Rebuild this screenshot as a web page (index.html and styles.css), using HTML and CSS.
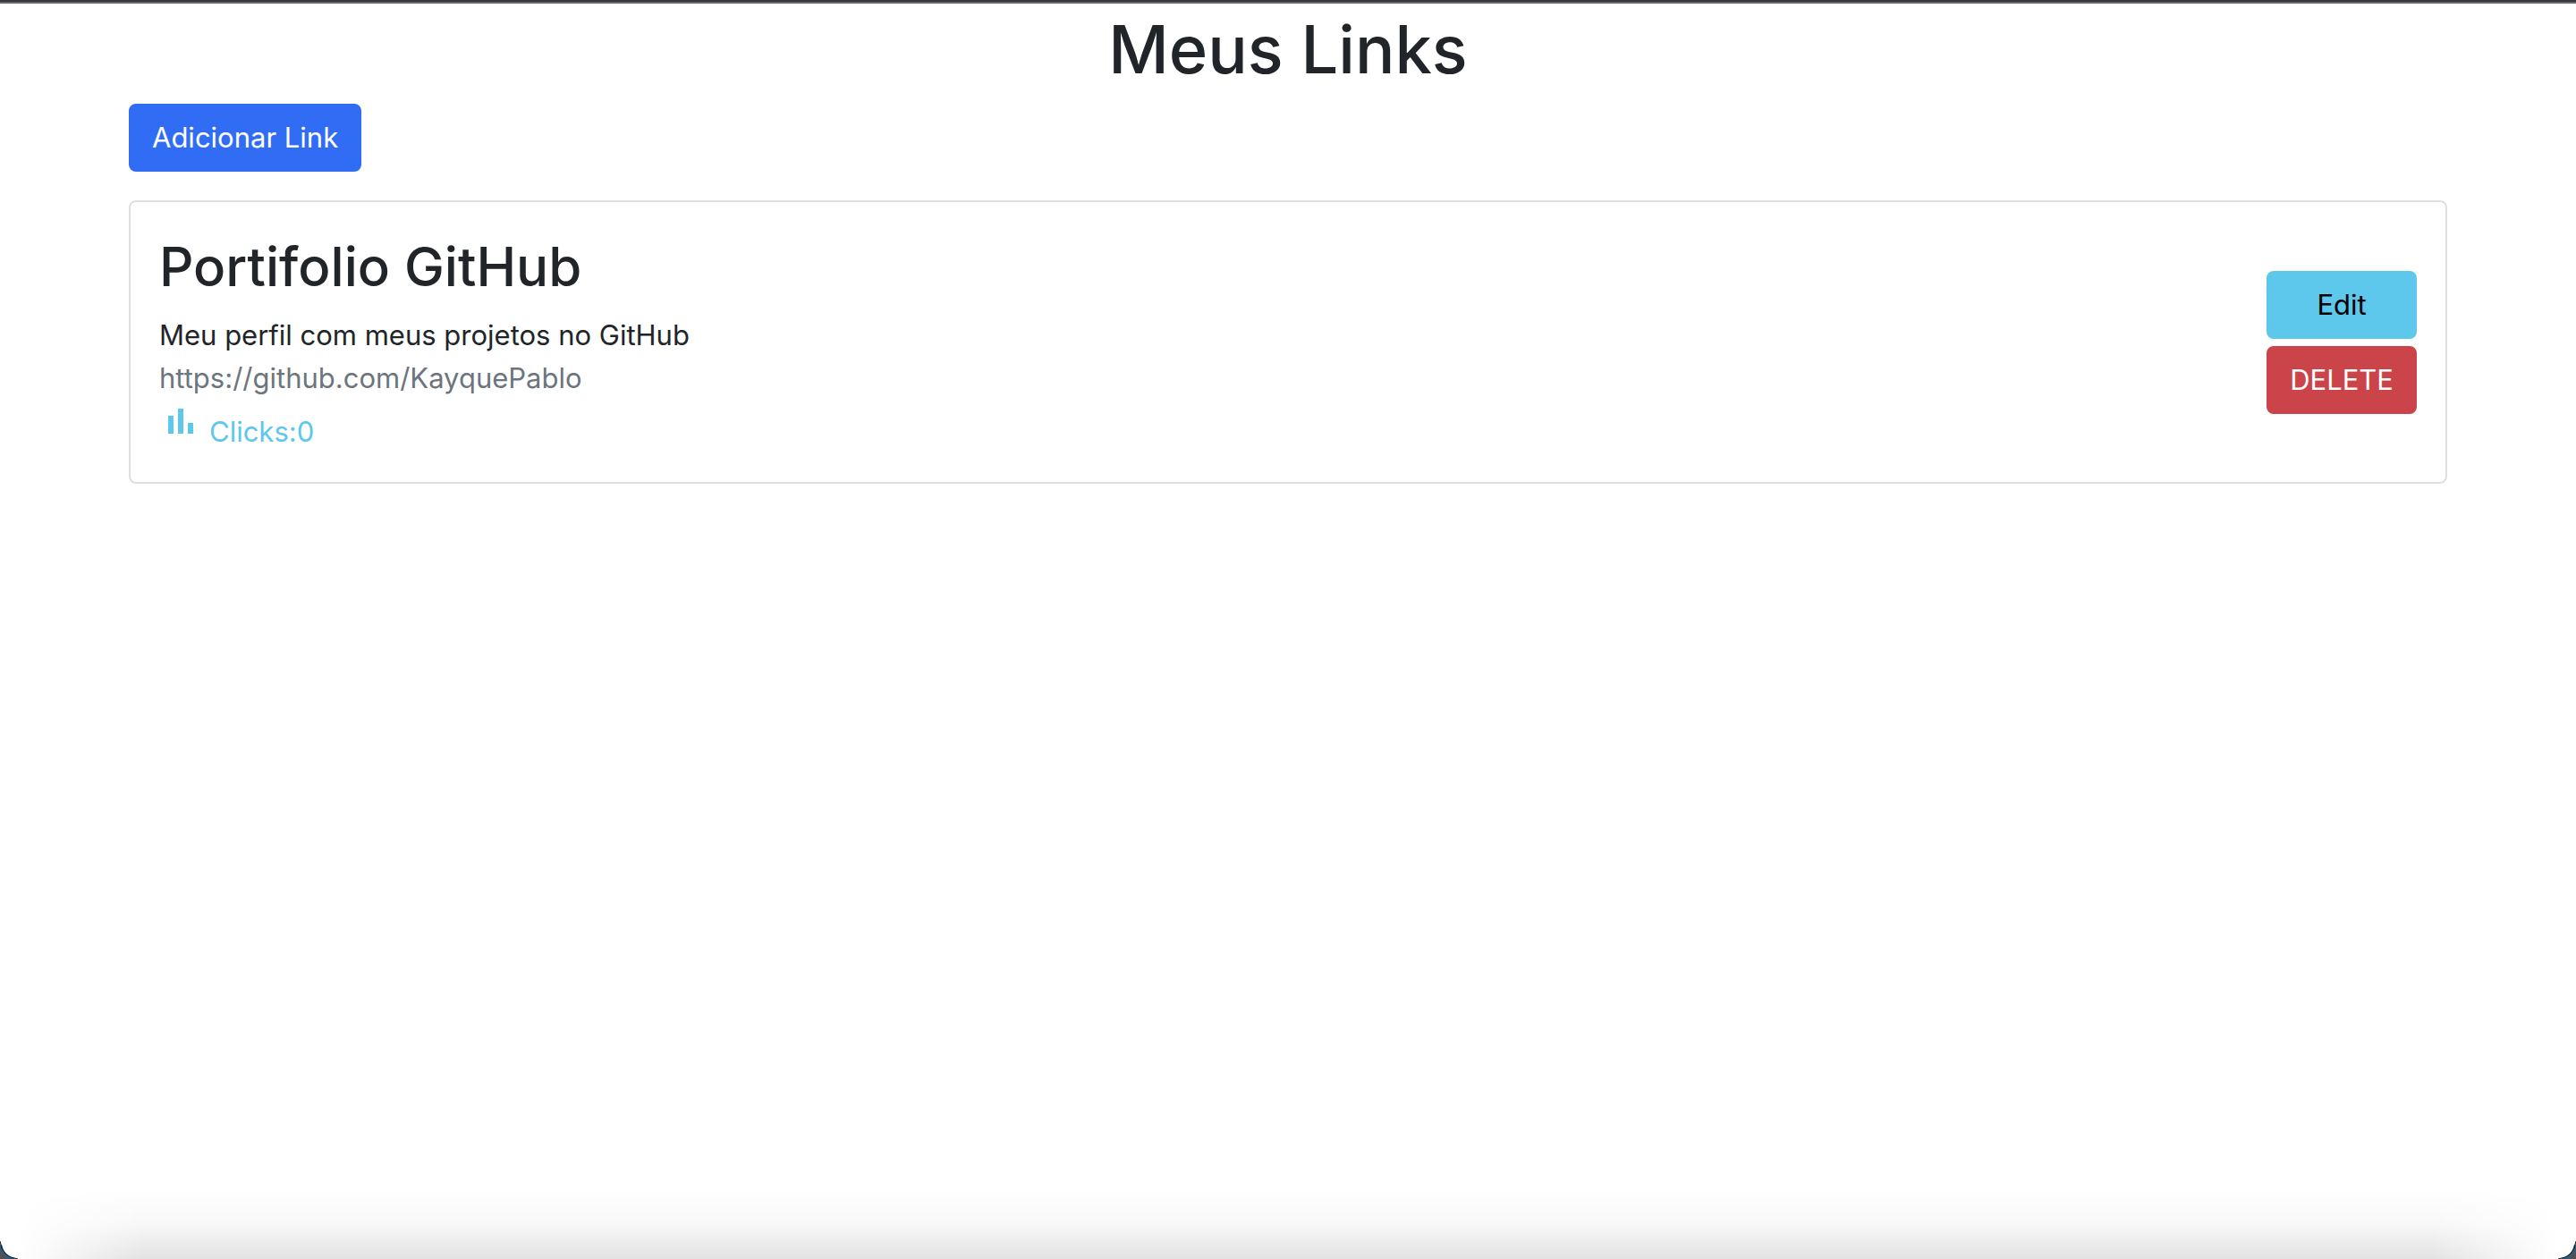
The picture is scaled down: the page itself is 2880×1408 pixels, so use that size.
FILE: index.html
```html
<!DOCTYPE html>
<html lang="pt-BR">
<head>
<meta charset="utf-8">
<title>Meus Links</title>
<link rel="stylesheet" href="styles.css">
</head>
<body>
<div class="toolbar-edge"></div>
<main class="container">
  <h1 class="page-title">Meus Links</h1>
  <button type="button" class="btn btn-primary">Adicionar Link</button>
  <article class="card">
    <div class="card-info">
      <h2 class="card-title">Portifolio GitHub</h2>
      <p class="card-text">Meu perfil com meus projetos no GitHub</p>
      <a class="card-url" href="https://github.com/KayquePablo">https://github.com/KayquePablo</a>
      <div class="clicks">
        <svg class="clicks-icon" viewBox="0 0 48 48" aria-hidden="true"><path d="M10 18h6v20h-6zM21 10h6v28h-6zM32 26h6v12h-6z"/></svg>
        <span class="clicks-label">Clicks:0</span>
      </div>
    </div>
    <div class="card-actions">
      <button type="button" class="btn btn-info">Edit</button>
      <button type="button" class="btn btn-danger">DELETE</button>
    </div>
  </article>
</main>
<div class="window-shadow"></div>
<svg class="corner corner-left" viewBox="0 0 20 20" aria-hidden="true"><path fill="#505257" d="M0 0Q1 19 20 20H0z"/><path fill="none" stroke="#176093" stroke-width="2" d="M1 4Q4 18 16 20"/><path fill="none" stroke="#101820" stroke-width="1" d="M0 0Q2 18 20 20"/></svg>
<svg class="corner corner-right" viewBox="0 0 20 20" aria-hidden="true"><path fill="#505257" d="M0 0Q1 19 20 20H0z"/><path fill="none" stroke="#176093" stroke-width="2" d="M1 4Q4 18 16 20"/><path fill="none" stroke="#101820" stroke-width="1" d="M0 0Q2 18 20 20"/></svg>
</body>
</html>
```
FILE: styles.css
```css
* { box-sizing: border-box; }

body {
  margin: 0;
  min-height: 100vh;
  background: #fff;
  color: #212529;
  font: 400 31px/48px Inter, "Liberation Sans", sans-serif;
}

.toolbar-edge {
  height: 4px;
  background: #36373b;
  border-bottom: 2px solid #646569;
}

.container {
  width: 90%;
  margin: 0 auto;
}

.page-title {
  margin: 0 0 10px;
  font-size: 74px;
  font-weight: 500;
  line-height: 102px;
  text-align: center;
}

.btn {
  display: block;
  padding: 12px 24px;
  border: 2px solid transparent;
  border-radius: 8px;
  font: inherit;
  cursor: pointer;
}

.btn-primary { background: #316cf4; border-color: #316cf4; color: #fff; }
.btn-info { background: #5dc7ec; border-color: #5dc7ec; color: #000; }
.btn-danger { background: #ca444a; border-color: #ca444a; color: #fff; }

.card {
  display: flex;
  align-items: center;
  justify-content: space-between;
  margin-top: 32px;
  padding: 32px;
  border: 2px solid #dfdfdf;
  border-radius: 8px;
}

.card-title {
  margin: 0 0 12px;
  font-size: 60px;
  font-weight: 500;
  line-height: 81px;
}

.card-text { margin: 0; }

.card-url {
  display: block;
  color: #6c757d;
  text-decoration: none;
}

.clicks {
  display: flex;
  align-items: flex-start;
  gap: 8px;
  color: #5dc7ec;
}

.clicks-icon {
  width: 48px;
  height: 48px;
  fill: currentColor;
}

.clicks-label { padding-top: 12px; }

.card-actions {
  display: flex;
  flex-direction: column;
  gap: 8px;
}

.window-shadow {
  position: fixed;
  right: 0;
  bottom: 0;
  left: 0;
  height: 76px;
  pointer-events: none;
  background: linear-gradient(to top, rgba(0, 0, 0, .11), rgba(0, 0, 0, .03) 50%, transparent);
  mask-image: linear-gradient(to right, transparent 20px, #000 160px, #000 calc(100% - 160px), transparent calc(100% - 20px));
}

.corner {
  position: fixed;
  bottom: 0;
  width: 20px;
  height: 20px;
}

.corner-left { left: 0; }
.corner-right { right: 0; transform: scaleX(-1); }
```
